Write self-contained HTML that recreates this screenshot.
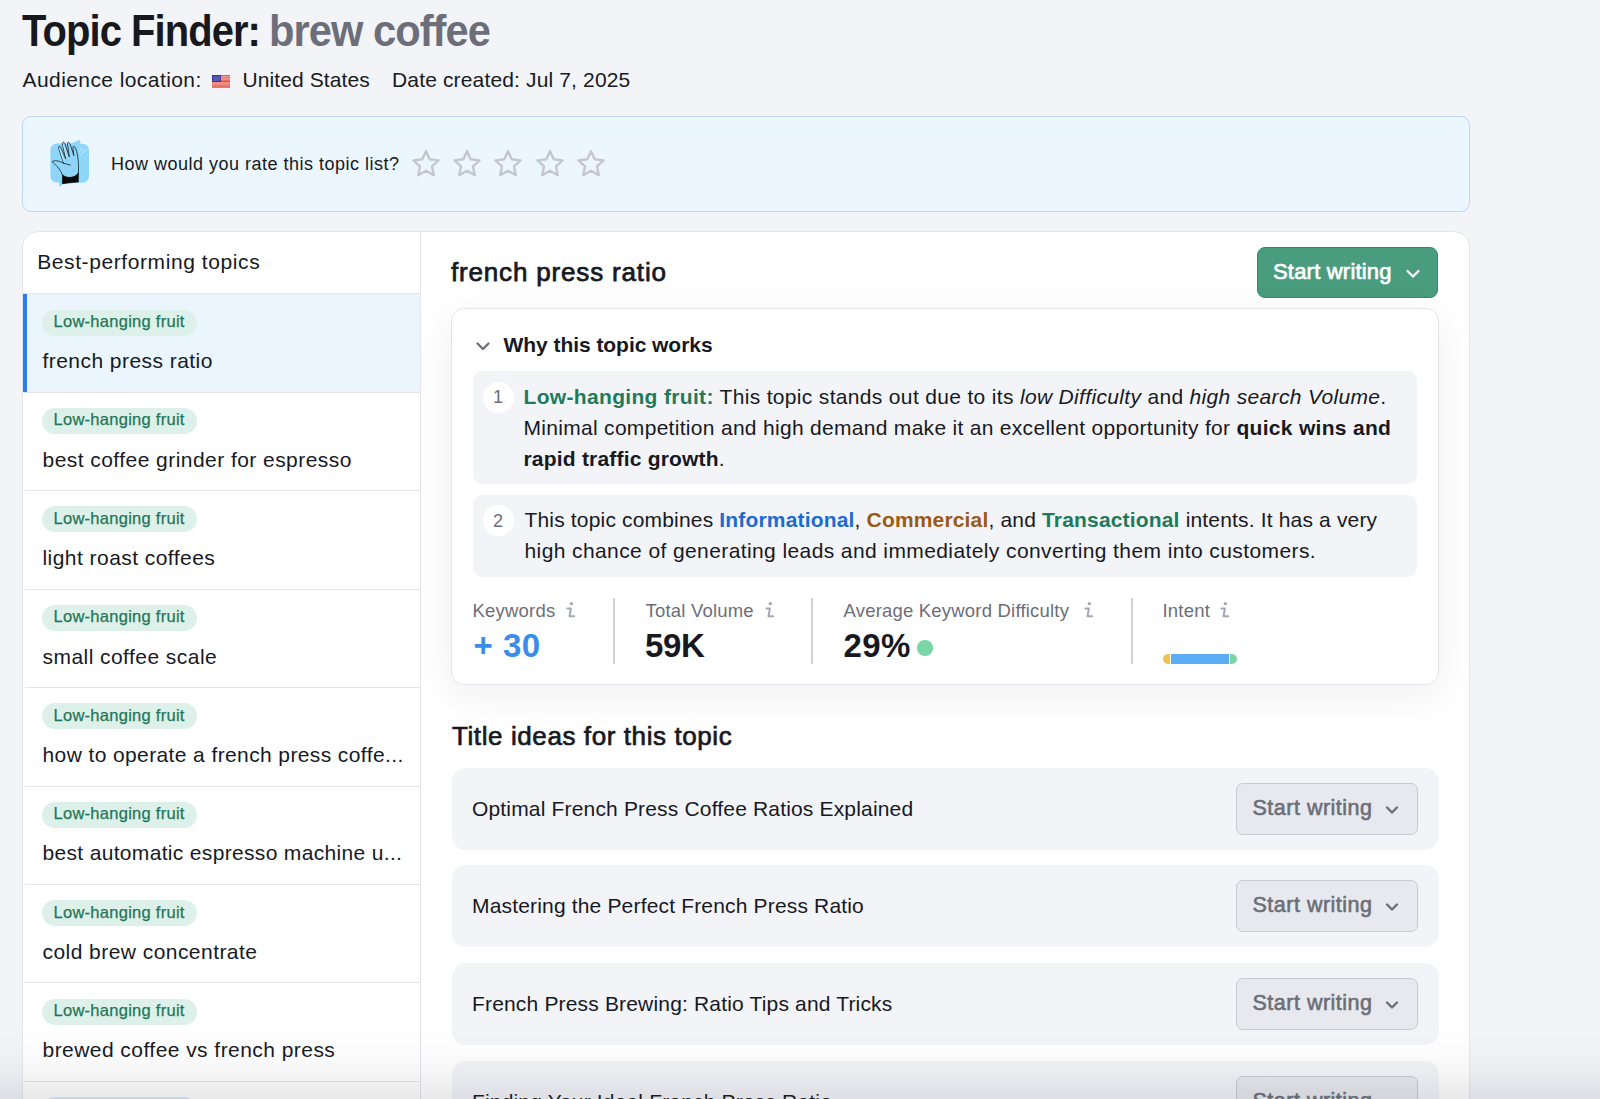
<!DOCTYPE html>
<html>
<head>
<meta charset="utf-8">
<style>
*{box-sizing:border-box;margin:0;padding:0}
html,body{width:1600px;height:1099px;overflow:hidden;background:#F3F4F8}
body{font-family:"Liberation Sans",sans-serif;color:#17191F;position:relative}
.a{position:absolute;white-space:nowrap}
</style>
</head>
<body>
<div class="a" style="left:21.5px;top:8.75px;font-size:44px;line-height:44px;transform:scaleX(0.907);transform-origin:0 0;font-weight:700;letter-spacing:-1.0px">Topic Finder:</div>
<div class="a" style="left:269px;top:8.75px;font-size:44px;line-height:44px;transform:scaleX(0.946);transform-origin:0 0;font-weight:700;color:#6C6E79;letter-spacing:-1.0px">brew coffee</div>
<div class="a" style="left:22.5px;top:69.22px;font-size:21px;line-height:21px;letter-spacing:0.42px">Audience location:</div>
<svg class="a" style="left:212px;top:75px" width="18" height="13" viewBox="0 0 18 13"><rect width="18" height="13" fill="#F08078"/><rect y="0" width="18" height="1.3" fill="#E55A50"/><rect y="1.3" width="18" height="1.1" fill="#F5B2AA"/><rect y="2.4" width="18" height="1.2" fill="#EC665C"/><rect y="3.6" width="18" height="1.0" fill="#F7BDB5"/><rect y="4.6" width="18" height="1.2" fill="#EE6E64"/><rect y="5.8" width="18" height="1.2" fill="#E5503F"/><rect y="7" width="18" height="6" fill="#F08A82"/><rect y="10" width="18" height="3" fill="#EC7169"/><rect width="8.8" height="7" fill="#2B30A0"/><rect x="0.8" y="0.8" width="7.2" height="5.4" fill="#5257B0"/></svg>
<div class="a" style="left:242.5px;top:69.22px;font-size:21px;line-height:21px;letter-spacing:0.1px">United States</div>
<div class="a" style="left:392px;top:69.22px;font-size:21px;line-height:21px;letter-spacing:0.15px">Date created: Jul 7, 2025</div>
<div class="a" style="left:22px;top:116px;width:1448px;height:96px;background:#EBF6FE;border:1px solid #BBD8F6;border-radius:9px"></div>
<svg class="a" style="left:46px;top:139px" width="48" height="50" viewBox="0 0 48 50">
<path d="M11.5 4.6 H25 L34 0.8 L34.5 4.7 H36 C40.5 4.7 43 7.5 43 12 V36.5 C43 41 40.5 43.8 36 43.8 H20 L13 47.8 L13.2 43.6 H11.5 C7 43.6 4.4 41 4.4 36.5 V12 C4.4 7.5 7 4.6 11.5 4.6 Z" fill="#8ED6F9"/>
<path d="M16.3 44.5 L16.6 37 C15.5 32 12 28 6.2 22.6 C9 21 13 21.7 17.6 24.3 L12.6 9.2 C12.2 7.3 13.8 6.6 14.8 8.2 L19.7 19.8 L16.3 5 C16.1 3 18 2.6 18.8 4.4 L23.3 17.8 L21.4 4.9 C21.3 3 23.2 2.8 23.9 4.6 L27.9 16.6 L26.8 8.6 C26.9 7 28.7 7.2 29.4 8.8 C31.4 13.5 32.4 20 32.5 28 L32.3 43 C27 43.6 21 44 16.3 44.5 Z" fill="#8ED6F9" stroke="#141414" stroke-width="0.75" stroke-linejoin="round"/>
<path d="M16.4 35.2 C19 38.6 28.5 39.8 32.4 33.2 L32.3 43 C27 43.4 21.5 44 16.6 45 Z" fill="#0A0A0A"/>
<path d="M17.6 24.3 L24.3 26" stroke="#141414" stroke-width="0.75" fill="none" stroke-linecap="round"/>
<path d="M13.6 9.5 L17.8 22.5 M17.2 5.5 L20.5 18.5" stroke="#FFFFFF" stroke-width="0.6" fill="none" opacity="0.9"/>
<path d="M33.3 12.6 L37 8.3 M34.4 16.5 L40.7 10.2" stroke="#E6F5FE" stroke-width="0.7"/>
</svg>
<div class="a" style="left:111px;top:155.26px;font-size:18px;line-height:18px;letter-spacing:0.5px">How would you rate this topic list?</div>
<svg class="a" style="left:412.0px;top:149px" width="28" height="28" viewBox="0 0 28 28"><path d="M14.00 2.20 L17.70 10.30 L26.55 11.32 L19.99 17.35 L21.76 26.08 L14.00 21.70 L6.24 26.08 L8.01 17.35 L1.45 11.32 L10.30 10.30 Z" fill="none" stroke="#C5C7D0" stroke-width="2.4" stroke-linejoin="round"/></svg>
<svg class="a" style="left:453.1px;top:149px" width="28" height="28" viewBox="0 0 28 28"><path d="M14.00 2.20 L17.70 10.30 L26.55 11.32 L19.99 17.35 L21.76 26.08 L14.00 21.70 L6.24 26.08 L8.01 17.35 L1.45 11.32 L10.30 10.30 Z" fill="none" stroke="#C5C7D0" stroke-width="2.4" stroke-linejoin="round"/></svg>
<svg class="a" style="left:494.3px;top:149px" width="28" height="28" viewBox="0 0 28 28"><path d="M14.00 2.20 L17.70 10.30 L26.55 11.32 L19.99 17.35 L21.76 26.08 L14.00 21.70 L6.24 26.08 L8.01 17.35 L1.45 11.32 L10.30 10.30 Z" fill="none" stroke="#C5C7D0" stroke-width="2.4" stroke-linejoin="round"/></svg>
<svg class="a" style="left:535.5px;top:149px" width="28" height="28" viewBox="0 0 28 28"><path d="M14.00 2.20 L17.70 10.30 L26.55 11.32 L19.99 17.35 L21.76 26.08 L14.00 21.70 L6.24 26.08 L8.01 17.35 L1.45 11.32 L10.30 10.30 Z" fill="none" stroke="#C5C7D0" stroke-width="2.4" stroke-linejoin="round"/></svg>
<svg class="a" style="left:576.6px;top:149px" width="28" height="28" viewBox="0 0 28 28"><path d="M14.00 2.20 L17.70 10.30 L26.55 11.32 L19.99 17.35 L21.76 26.08 L14.00 21.70 L6.24 26.08 L8.01 17.35 L1.45 11.32 L10.30 10.30 Z" fill="none" stroke="#C5C7D0" stroke-width="2.4" stroke-linejoin="round"/></svg>
<div class="a" style="left:22px;top:231px;width:1448px;height:900px;background:#fff;border:1px solid #E4E5EB;border-radius:16px"></div>
<div class="a" style="left:420px;top:232px;width:1px;height:900px;background:#E4E5EB"></div>
<div class="a" style="left:37.2px;top:251.22px;font-size:21px;line-height:21px;letter-spacing:0.59px">Best-performing topics</div>
<div class="a" style="left:23px;top:293px;width:397px;height:99px;background:#EBF5FE"></div>
<div class="a" style="left:23px;top:293px;width:4px;height:99px;background:#2D7DF2"></div>
<div class="a" style="left:23px;top:293px;width:397px;height:1px;background:#E4E5EB"></div>
<div class="a" style="left:42px;top:309.5px;width:155px;height:26px;background:#DDF1EA;border-radius:13px"></div>
<div class="a" style="left:53.5px;top:313.03px;font-size:16.5px;line-height:16.5px;-webkit-text-stroke:0.25px currentColor;color:#1F7658;letter-spacing:0.27px">Low-hanging fruit</div>
<div class="a" style="left:42.5px;top:350.22px;font-size:21px;line-height:21px;letter-spacing:0.45px">french press ratio</div>
<div class="a" style="left:23px;top:392px;width:397px;height:1px;background:#E4E5EB"></div>
<div class="a" style="left:42px;top:407.94px;width:155px;height:26px;background:#DDF1EA;border-radius:13px"></div>
<div class="a" style="left:53.5px;top:411.47px;font-size:16.5px;line-height:16.5px;-webkit-text-stroke:0.25px currentColor;color:#1F7658;letter-spacing:0.27px">Low-hanging fruit</div>
<div class="a" style="left:42.5px;top:448.66px;font-size:21px;line-height:21px;letter-spacing:0.45px">best coffee grinder for espresso</div>
<div class="a" style="left:25px;top:490px;width:395px;height:1px;background:#E4E5EB"></div>
<div class="a" style="left:42px;top:506.38px;width:155px;height:26px;background:#DDF1EA;border-radius:13px"></div>
<div class="a" style="left:53.5px;top:509.91px;font-size:16.5px;line-height:16.5px;-webkit-text-stroke:0.25px currentColor;color:#1F7658;letter-spacing:0.27px">Low-hanging fruit</div>
<div class="a" style="left:42.5px;top:547.10px;font-size:21px;line-height:21px;letter-spacing:0.45px">light roast coffees</div>
<div class="a" style="left:25px;top:589px;width:395px;height:1px;background:#E4E5EB"></div>
<div class="a" style="left:42px;top:604.82px;width:155px;height:26px;background:#DDF1EA;border-radius:13px"></div>
<div class="a" style="left:53.5px;top:608.35px;font-size:16.5px;line-height:16.5px;-webkit-text-stroke:0.25px currentColor;color:#1F7658;letter-spacing:0.27px">Low-hanging fruit</div>
<div class="a" style="left:42.5px;top:645.54px;font-size:21px;line-height:21px;letter-spacing:0.45px">small coffee scale</div>
<div class="a" style="left:25px;top:687px;width:395px;height:1px;background:#E4E5EB"></div>
<div class="a" style="left:42px;top:703.26px;width:155px;height:26px;background:#DDF1EA;border-radius:13px"></div>
<div class="a" style="left:53.5px;top:706.79px;font-size:16.5px;line-height:16.5px;-webkit-text-stroke:0.25px currentColor;color:#1F7658;letter-spacing:0.27px">Low-hanging fruit</div>
<div class="a" style="left:42.5px;top:743.98px;font-size:21px;line-height:21px;letter-spacing:0.39px">how to operate a french press coffe...</div>
<div class="a" style="left:25px;top:786px;width:395px;height:1px;background:#E4E5EB"></div>
<div class="a" style="left:42px;top:801.7px;width:155px;height:26px;background:#DDF1EA;border-radius:13px"></div>
<div class="a" style="left:53.5px;top:805.23px;font-size:16.5px;line-height:16.5px;-webkit-text-stroke:0.25px currentColor;color:#1F7658;letter-spacing:0.27px">Low-hanging fruit</div>
<div class="a" style="left:42.5px;top:842.42px;font-size:21px;line-height:21px;letter-spacing:0.33px">best automatic espresso machine u...</div>
<div class="a" style="left:25px;top:884px;width:395px;height:1px;background:#E4E5EB"></div>
<div class="a" style="left:42px;top:900.14px;width:155px;height:26px;background:#DDF1EA;border-radius:13px"></div>
<div class="a" style="left:53.5px;top:903.67px;font-size:16.5px;line-height:16.5px;-webkit-text-stroke:0.25px currentColor;color:#1F7658;letter-spacing:0.27px">Low-hanging fruit</div>
<div class="a" style="left:42.5px;top:940.86px;font-size:21px;line-height:21px;letter-spacing:0.45px">cold brew concentrate</div>
<div class="a" style="left:25px;top:982px;width:395px;height:1px;background:#E4E5EB"></div>
<div class="a" style="left:42px;top:998.58px;width:155px;height:26px;background:#DDF1EA;border-radius:13px"></div>
<div class="a" style="left:53.5px;top:1002.11px;font-size:16.5px;line-height:16.5px;-webkit-text-stroke:0.25px currentColor;color:#1F7658;letter-spacing:0.27px">Low-hanging fruit</div>
<div class="a" style="left:42.5px;top:1039.30px;font-size:21px;line-height:21px;letter-spacing:0.45px">brewed coffee vs french press</div>
<div class="a" style="left:25px;top:1081px;width:395px;height:1px;background:#E4E5EB"></div>
<div class="a" style="left:42px;top:1097.02px;width:155px;height:26px;background:#D8E6FA;border-radius:13px"></div>
<div class="a" style="left:451px;top:258.99px;font-size:26px;line-height:26px;-webkit-text-stroke:0.75px currentColor;letter-spacing:0.83px">french press ratio</div>
<div class="a" style="left:1257px;top:247px;width:181px;height:51px;background:#4A9C7F;border:1px solid #22906E;border-radius:8px"></div>
<div class="a" style="left:1273px;top:260.88px;font-size:22px;line-height:22px;-webkit-text-stroke:0.7px currentColor;color:#fff;letter-spacing:0.2px">Start writing</div>
<svg class="a" style="left:1404px;top:266px" width="18" height="16" viewBox="0 0 18 16"><path d="M3.5 5 L9 10.5 L14.5 5" fill="none" stroke="#fff" stroke-width="2.2" stroke-linecap="round" stroke-linejoin="round"/></svg>
<div class="a" style="left:451px;top:308px;width:988px;height:377px;background:#fff;border:1px solid #E4E5EB;border-radius:13px;box-shadow:0 10px 40px rgba(30,35,60,0.07)"></div>
<svg class="a" style="left:474px;top:338px" width="18" height="16" viewBox="0 0 18 16"><path d="M3.5 5.5 L9 11 L14.5 5.5" fill="none" stroke="#6C6E79" stroke-width="2.3" stroke-linecap="round" stroke-linejoin="round"/></svg>
<div class="a" style="left:503.5px;top:334.22px;font-size:21px;line-height:21px;font-weight:700;letter-spacing:-0.05px">Why this topic works</div>
<div class="a" style="left:473px;top:371px;width:944px;height:113px;background:#F3F4F8;border-radius:9px"></div>
<div class="a" style="left:483px;top:381.5px;width:31px;height:31px;background:#fff;border-radius:50%"></div>
<div class="a" style="left:493px;top:388.26px;font-size:18px;line-height:18px;color:#6C6E79">1</div>
<div class="a" style="left:523.5px;top:386.22px;font-size:21px;line-height:21px;letter-spacing:0.33px"><span style="color:#1F7A5C;font-weight:700">Low-hanging fruit:</span> This topic stands out due to its <i>low Difficulty</i> and <i>high search Volume</i>.</div>
<div class="a" style="left:523.5px;top:416.72px;font-size:21px;line-height:21px;letter-spacing:0.3px">Minimal competition and high demand make it an excellent opportunity for <b>quick wins and</b></div>
<div class="a" style="left:523.5px;top:447.72px;font-size:21px;line-height:21px;letter-spacing:0.2px"><b>rapid traffic growth</b>.</div>
<div class="a" style="left:473px;top:495px;width:944px;height:82px;background:#F3F4F8;border-radius:9px"></div>
<div class="a" style="left:483px;top:504.5px;width:31px;height:31px;background:#fff;border-radius:50%"></div>
<div class="a" style="left:493px;top:511.76px;font-size:18px;line-height:18px;color:#6C6E79">2</div>
<div class="a" style="left:524.5px;top:509.22px;font-size:21px;line-height:21px;letter-spacing:0.17px">This topic combines <b style="color:#1B6BD0">Informational</b>, <b style="color:#9A5A14">Commercial</b>, and <b style="color:#1F7A5C">Transactional</b> intents. It has a very</div>
<div class="a" style="left:524.5px;top:540.22px;font-size:21px;line-height:21px;letter-spacing:0.4px">high chance of generating leads and immediately converting them into customers.</div>
<div class="a" style="left:472.5px;top:601.84px;font-size:18.5px;line-height:18.5px;color:#6C6E79;letter-spacing:0.2px">Keywords</div>
<svg class="a" style="left:565px;top:600px" width="12" height="20" viewBox="0 0 12 20"><circle cx="6.3" cy="3.7" r="1.65" fill="#A3A7B3"/><path d="M2.4 8.5 L5.9 8.5 L4.5 16.2 L9.2 16.2" fill="none" stroke="#A3A7B3" stroke-width="1.9" stroke-linecap="round" stroke-linejoin="round"/></svg>
<div class="a" style="left:645.5px;top:601.84px;font-size:18.5px;line-height:18.5px;color:#6C6E79;letter-spacing:0.2px">Total Volume</div>
<svg class="a" style="left:763.5px;top:600px" width="12" height="20" viewBox="0 0 12 20"><circle cx="6.3" cy="3.7" r="1.65" fill="#A3A7B3"/><path d="M2.4 8.5 L5.9 8.5 L4.5 16.2 L9.2 16.2" fill="none" stroke="#A3A7B3" stroke-width="1.9" stroke-linecap="round" stroke-linejoin="round"/></svg>
<div class="a" style="left:843.5px;top:601.84px;font-size:18.5px;line-height:18.5px;color:#6C6E79;letter-spacing:0.2px">Average Keyword Difficulty</div>
<svg class="a" style="left:1083px;top:600px" width="12" height="20" viewBox="0 0 12 20"><circle cx="6.3" cy="3.7" r="1.65" fill="#A3A7B3"/><path d="M2.4 8.5 L5.9 8.5 L4.5 16.2 L9.2 16.2" fill="none" stroke="#A3A7B3" stroke-width="1.9" stroke-linecap="round" stroke-linejoin="round"/></svg>
<div class="a" style="left:1162.5px;top:601.84px;font-size:18.5px;line-height:18.5px;color:#6C6E79;letter-spacing:0.2px">Intent</div>
<svg class="a" style="left:1219px;top:600px" width="12" height="20" viewBox="0 0 12 20"><circle cx="6.3" cy="3.7" r="1.65" fill="#A3A7B3"/><path d="M2.4 8.5 L5.9 8.5 L4.5 16.2 L9.2 16.2" fill="none" stroke="#A3A7B3" stroke-width="1.9" stroke-linecap="round" stroke-linejoin="round"/></svg>
<div class="a" style="left:613px;top:598px;width:1.5px;height:66px;background:#D0D2D9"></div>
<div class="a" style="left:811px;top:598px;width:1.5px;height:66px;background:#D0D2D9"></div>
<div class="a" style="left:1131px;top:598px;width:1.5px;height:66px;background:#D0D2D9"></div>
<div class="a" style="left:473.5px;top:629.07px;font-size:33px;line-height:33px;font-weight:700;color:#3A8DEB;letter-spacing:0.5px">+ 30</div>
<div class="a" style="left:645px;top:629.07px;font-size:33px;line-height:33px;font-weight:700;letter-spacing:-0.3px">59K</div>
<div class="a" style="left:843.5px;top:629.07px;font-size:33px;line-height:33px;font-weight:700;letter-spacing:0.35px">29%</div>
<div class="a" style="left:917px;top:640px;width:15.5px;height:15.5px;background:#79D6A6;border-radius:50%"></div>
<div class="a" style="left:1163px;top:654px;width:7px;height:10px;background:#F0C153;border-radius:5px 0 0 5px"></div>
<div class="a" style="left:1171px;top:654px;width:58px;height:10px;background:#5BAEF6"></div>
<div class="a" style="left:1230px;top:654px;width:7px;height:10px;background:#79D5A4;border-radius:0 5px 5px 0"></div>
<div class="a" style="left:452px;top:723.49px;font-size:26px;line-height:26px;-webkit-text-stroke:0.7px currentColor;letter-spacing:0.59px">Title ideas for this topic</div>
<div class="a" style="left:451.5px;top:768px;width:987px;height:82px;background:#F3F4F8;border-radius:14px"></div>
<div class="a" style="left:472px;top:798.22px;font-size:21px;line-height:21px;letter-spacing:0.17px">Optimal French Press Coffee Ratios Explained</div>
<div class="a" style="left:1236px;top:783px;width:182px;height:52px;background:#E8E9EE;border:1px solid #C8CAD2;border-radius:7px"></div>
<div class="a" style="left:1252.5px;top:797.80px;font-size:21.5px;line-height:21.5px;-webkit-text-stroke:0.6px currentColor;color:#6C6E79;letter-spacing:0.5px">Start writing</div>
<svg class="a" style="left:1383px;top:802px" width="18" height="16" viewBox="0 0 18 16"><path d="M4 5.5 L9 10.5 L14 5.5" fill="none" stroke="#6C6E79" stroke-width="2.4" stroke-linecap="round" stroke-linejoin="round"/></svg>
<div class="a" style="left:451.5px;top:865px;width:987px;height:82px;background:#F3F4F8;border-radius:14px"></div>
<div class="a" style="left:472px;top:895.22px;font-size:21px;line-height:21px;letter-spacing:0.17px">Mastering the Perfect French Press Ratio</div>
<div class="a" style="left:1236px;top:880px;width:182px;height:52px;background:#E8E9EE;border:1px solid #C8CAD2;border-radius:7px"></div>
<div class="a" style="left:1252.5px;top:894.80px;font-size:21.5px;line-height:21.5px;-webkit-text-stroke:0.6px currentColor;color:#6C6E79;letter-spacing:0.5px">Start writing</div>
<svg class="a" style="left:1383px;top:899px" width="18" height="16" viewBox="0 0 18 16"><path d="M4 5.5 L9 10.5 L14 5.5" fill="none" stroke="#6C6E79" stroke-width="2.4" stroke-linecap="round" stroke-linejoin="round"/></svg>
<div class="a" style="left:451.5px;top:963px;width:987px;height:82px;background:#F3F4F8;border-radius:14px"></div>
<div class="a" style="left:472px;top:993.22px;font-size:21px;line-height:21px;letter-spacing:0.17px">French Press Brewing: Ratio Tips and Tricks</div>
<div class="a" style="left:1236px;top:978px;width:182px;height:52px;background:#E8E9EE;border:1px solid #C8CAD2;border-radius:7px"></div>
<div class="a" style="left:1252.5px;top:992.80px;font-size:21.5px;line-height:21.5px;-webkit-text-stroke:0.6px currentColor;color:#6C6E79;letter-spacing:0.5px">Start writing</div>
<svg class="a" style="left:1383px;top:997px" width="18" height="16" viewBox="0 0 18 16"><path d="M4 5.5 L9 10.5 L14 5.5" fill="none" stroke="#6C6E79" stroke-width="2.4" stroke-linecap="round" stroke-linejoin="round"/></svg>
<div class="a" style="left:451.5px;top:1061px;width:987px;height:82px;background:#F3F4F8;border-radius:14px"></div>
<div class="a" style="left:472px;top:1091.22px;font-size:21px;line-height:21px;letter-spacing:0.17px">Finding Your Ideal French Press Ratio</div>
<div class="a" style="left:1236px;top:1076px;width:182px;height:52px;background:#E8E9EE;border:1px solid #C8CAD2;border-radius:7px"></div>
<div class="a" style="left:1252.5px;top:1090.80px;font-size:21.5px;line-height:21.5px;-webkit-text-stroke:0.6px currentColor;color:#6C6E79;letter-spacing:0.5px">Start writing</div>
<svg class="a" style="left:1383px;top:1095px" width="18" height="16" viewBox="0 0 18 16"><path d="M4 5.5 L9 10.5 L14 5.5" fill="none" stroke="#6C6E79" stroke-width="2.4" stroke-linecap="round" stroke-linejoin="round"/></svg>
<div class="a" style="left:0px;top:1026px;width:1600px;height:73px;background:linear-gradient(to bottom, rgba(60,60,72,0) 0%, rgba(60,60,72,0.015) 35%, rgba(60,60,72,0.05) 65%, rgba(60,60,72,0.095) 88%, rgba(60,60,72,0.115) 100%)"></div>
</body>
</html>
